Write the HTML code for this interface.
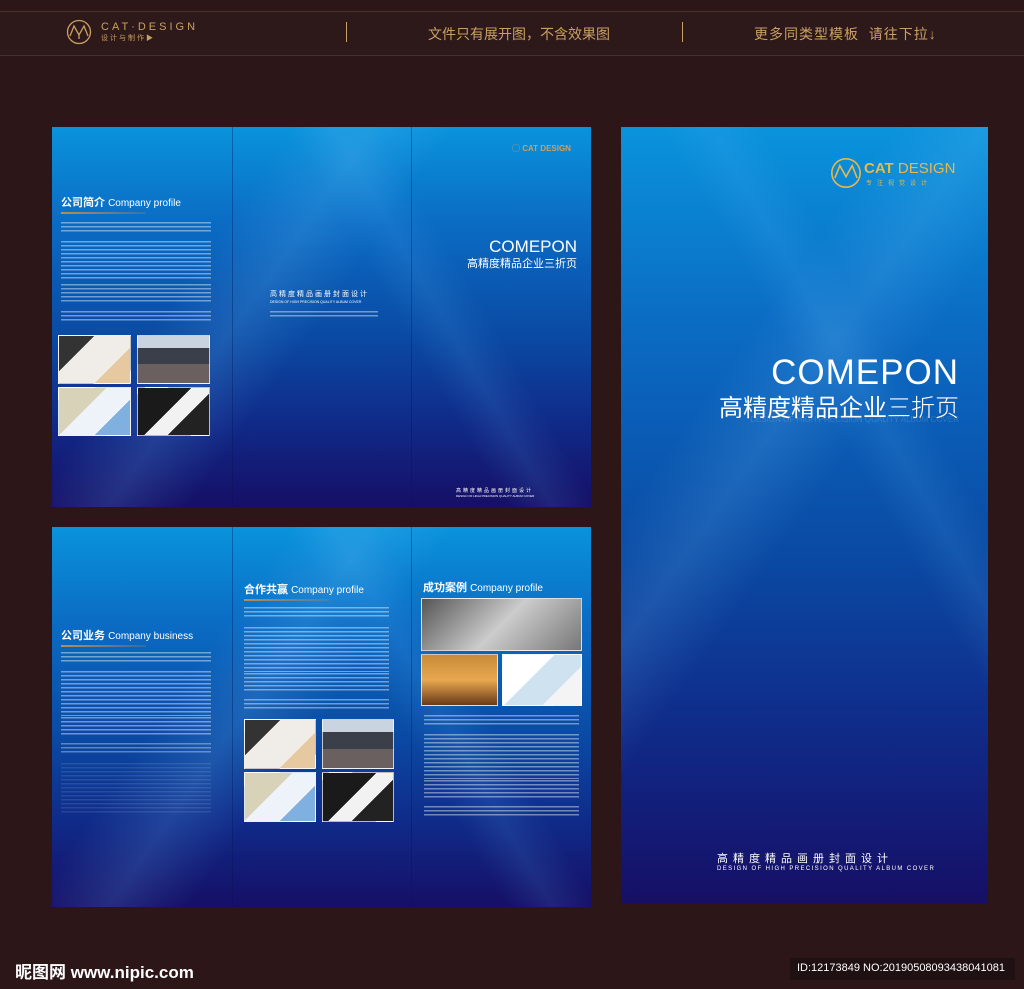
<!DOCTYPE html><html><head><meta charset="utf-8"><style>
*{margin:0;padding:0;box-sizing:border-box}
body{width:1024px;height:989px;background:#2c1617;position:relative;overflow:hidden;font-family:"Liberation Sans","Noto Sans CJK SC",sans-serif}
.a{position:absolute}
.band{left:0;top:11px;width:1024px;height:45px;background:#2e191a;border-top:1px solid #4a3028;border-bottom:1px solid #4a3028}
.gold{color:#c9a063}
.panel{position:absolute;overflow:hidden;background:linear-gradient(180deg,#0a93dc 0%,#0b6cc4 25%,#0a4aa4 55%,#102a88 78%,#160f66 100%)}
.panel .sw{position:absolute;inset:0;background:linear-gradient(125deg,rgba(255,255,255,0) 30%,rgba(120,200,255,.16) 40%,rgba(255,255,255,0) 50%),linear-gradient(60deg,rgba(255,255,255,0) 60%,rgba(100,190,255,.12) 66%,rgba(255,255,255,0) 72%)}
.fold{position:absolute;top:0;bottom:0;width:1px;background:rgba(0,20,80,.35)}
.t{color:#fff;font-weight:bold;font-size:11px;white-space:nowrap}
.t span{font-weight:normal;font-size:10px}
.ul{height:2px;background:linear-gradient(90deg,#c08a50,rgba(192,138,80,.2))}
.tx{position:absolute;background:repeating-linear-gradient(180deg,rgba(255,255,255,.42) 0 1.5px,transparent 1.5px 4px)}
.ph{position:absolute;border:1px solid rgba(255,255,255,.7)}
.p1{background:linear-gradient(135deg,#333 0 30%,#f0ece8 30% 70%,#e6c9a0 70%)}
.p2{background:linear-gradient(180deg,#c9d4e0 0 25%,#3a3f4a 25% 60%,#6a6060 60%)}
.p3{background:linear-gradient(135deg,#d8d2b8 0 40%,#eef3fa 40% 70%,#7fb0e0 70%)}
.p4{background:linear-gradient(135deg,#1a1a1a 0 45%,#f2f2f2 45% 65%,#222 65%)}
.p5{background:linear-gradient(135deg,#555,#ccc 50%,#777)}
.p6{background:linear-gradient(180deg,#c98a3a,#e8a850 50%,#6b3a18)}
.p7{background:linear-gradient(135deg,#fff 0 40%,#cfe2f0 40% 70%,#f4f4f4 70%)}
.w{color:#fff;white-space:nowrap}
</style></head><body>
<div class="a band"></div>
<svg class="a" style="left:66px;top:19px" width="26" height="26" viewBox="0 0 26 26"><circle cx="13" cy="13" r="11.5" fill="none" stroke="#c9a063" stroke-width="1.3"/><path d="M4 17 L8 7 L13 16 L18 7 L22 17 M13 16 V20" fill="none" stroke="#c9a063" stroke-width="1.3"/></svg>
<div class="a gold" style="left:101px;top:21px;font-size:11px;letter-spacing:3px">CAT·DESIGN</div>
<div class="a gold" style="left:101px;top:33px;font-size:7px;letter-spacing:2px">设计与制作▶</div>
<div class="a" style="left:346px;top:22px;width:1px;height:20px;background:#c9a063"></div>
<div class="a" style="left:682px;top:22px;width:1px;height:20px;background:#c9a063"></div>
<div class="a gold" style="left:428px;top:24px;font-size:14px">文件只有展开图，不含效果图</div>
<div class="a gold" style="left:754px;top:24px;font-size:14px;letter-spacing:1px">更多同类型模板&nbsp;&nbsp;请往下拉↓</div>

<div class="panel" style="left:52px;top:127px;width:539px;height:380px"><div class="sw"></div>
<div class="fold" style="left:180px"></div><div class="fold" style="left:359px"></div>
<div class="a t" style="left:9px;top:67px">公司简介 <span>Company profile</span></div>
<div class="a ul" style="left:9px;top:85px;width:85px"></div>
<div class="tx" style="left:9px;top:95px;width:150px;height:10px"></div>
<div class="tx" style="left:9px;top:114px;width:150px;height:40px"></div>
<div class="tx" style="left:9px;top:157px;width:150px;height:18px"></div>
<div class="tx" style="left:9px;top:184px;width:150px;height:10px"></div>
<div class="ph p1" style="left:6px;top:208px;width:73px;height:49px"></div>
<div class="ph p2" style="left:85px;top:208px;width:73px;height:49px"></div>
<div class="ph p3" style="left:6px;top:260px;width:73px;height:49px"></div>
<div class="ph p4" style="left:85px;top:260px;width:73px;height:49px"></div>
<div class="a w" style="left:218px;top:162px;font-size:7px;letter-spacing:2px">高精度精品画册封面设计</div>
<div class="a w" style="left:218px;top:173px;font-size:3.5px">DESIGN OF HIGH PRECISION QUALITY ALBUM COVER</div>
<div class="tx" style="left:218px;top:184px;width:108px;height:7px"></div>
<div class="a gold" style="left:460px;top:16px;font-size:8px;font-weight:bold">◯ CAT DESIGN</div>
<div class="a w" style="left:400px;top:110px;width:125px;text-align:right;font-size:17px;font-weight:300">COMEPON</div>
<div class="a w" style="left:400px;top:128px;width:125px;text-align:right;font-size:11px">高精度精品企业三折页</div>
<div class="a w" style="left:404px;top:360px;font-size:5px;letter-spacing:2px">高精度精品画册封面设计</div>
<div class="a w" style="left:404px;top:367px;font-size:3px">DESIGN OF HIGH PRECISION QUALITY ALBUM COVER</div>
</div>

<div class="panel" style="left:52px;top:527px;width:539px;height:380px"><div class="sw"></div>
<div class="fold" style="left:180px"></div><div class="fold" style="left:359px"></div>
<div class="a t" style="left:9px;top:100px">公司业务 <span>Company business</span></div>
<div class="a ul" style="left:9px;top:118px;width:85px"></div>
<div class="tx" style="left:9px;top:125px;width:150px;height:10px"></div>
<div class="tx" style="left:9px;top:144px;width:150px;height:45px"></div>
<div class="tx" style="left:9px;top:190px;width:150px;height:18px"></div>
<div class="tx" style="left:9px;top:216px;width:150px;height:10px;opacity:.8"></div>
<div class="tx" style="left:9px;top:236px;width:150px;height:50px;opacity:.25"></div>
<div class="a t" style="left:192px;top:54px">合作共赢 <span>Company profile</span></div>
<div class="a ul" style="left:192px;top:72px;width:85px"></div>
<div class="tx" style="left:192px;top:80px;width:145px;height:10px"></div>
<div class="tx" style="left:192px;top:100px;width:145px;height:45px"></div>
<div class="tx" style="left:192px;top:146px;width:145px;height:18px"></div>
<div class="tx" style="left:192px;top:172px;width:145px;height:10px"></div>
<div class="ph p1" style="left:192px;top:192px;width:72px;height:50px"></div>
<div class="ph p2" style="left:270px;top:192px;width:72px;height:50px"></div>
<div class="ph p3" style="left:192px;top:245px;width:72px;height:50px"></div>
<div class="ph p4" style="left:270px;top:245px;width:72px;height:50px"></div>
<div class="a t" style="left:371px;top:52px">成功案例 <span>Company profile</span></div>
<div class="ph p5" style="left:369px;top:71px;width:161px;height:53px"></div>
<div class="ph p6" style="left:369px;top:127px;width:77px;height:52px"></div>
<div class="ph p7" style="left:450px;top:127px;width:80px;height:52px"></div>
<div class="tx" style="left:372px;top:188px;width:155px;height:10px"></div>
<div class="tx" style="left:372px;top:207px;width:155px;height:45px"></div>
<div class="tx" style="left:372px;top:253px;width:155px;height:18px"></div>
<div class="tx" style="left:372px;top:279px;width:155px;height:10px"></div>
</div>

<div class="panel" style="left:621px;top:127px;width:367px;height:776px"><div class="sw"></div>
<svg class="a" style="left:209px;top:30px" width="32" height="32" viewBox="0 0 26 26"><circle cx="13" cy="13" r="11.5" fill="none" stroke="#e8b84a" stroke-width="1.3"/><path d="M4 17 L8 7 L13 16 L18 7 L22 17" fill="none" stroke="#e8b84a" stroke-width="1.3"/></svg>
<div class="a" style="left:243px;top:33px;font-size:15px;color:#e8b84a;white-space:nowrap"><b>CAT</b> DESIGN</div>
<div class="a" style="left:245px;top:51px;font-size:6px;color:#e8b84a;letter-spacing:5px;white-space:nowrap">专注视觉设计</div>
<div class="a w" style="left:80px;top:226px;width:258px;text-align:right;font-size:35px;font-weight:300;letter-spacing:1px">COMEPON</div>
<div class="a w" style="left:80px;top:261px;width:258px;text-align:right;font-size:24px">高精度精品企业<span style="font-weight:300">三折页</span></div>
<div class="a" style="left:100px;top:288px;width:238px;text-align:right;font-size:8px;color:rgba(255,255,255,.15);white-space:nowrap">DESIGN OF HIGH PRECISION QUALITY ALBUM COVER</div>
<div class="a w" style="left:96px;top:723px;font-size:11px;letter-spacing:5px">高精度精品画册封面设计</div>
<div class="a w" style="left:96px;top:739px;font-size:6px;letter-spacing:1.4px">DESIGN OF HIGH PRECISION QUALITY ALBUM COVER</div>
</div>

<div class="a w" style="left:15px;top:958px;font-size:17px;font-weight:bold">昵图网 www.nipic.com</div>
<div class="a" style="left:790px;top:958px;width:225px;height:22px;background:#1f1012"></div>
<div class="a w" style="left:797px;top:962px;font-size:11px">ID:12173849 NO:20190508093438041081</div>
</body></html>
